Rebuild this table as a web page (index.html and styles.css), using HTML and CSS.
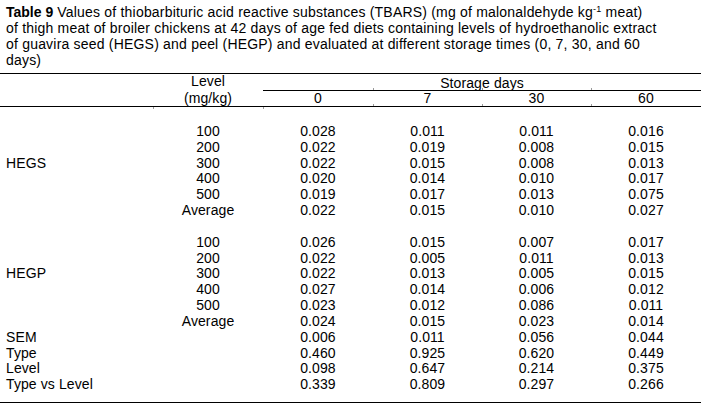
FILE: index.html
```html
<!DOCTYPE html>
<html>
<head>
<meta charset="utf-8">
<link rel="stylesheet" href="styles.css">
</head>
<body>
<div class="page">
  <p class="caption"><b>Table 9</b> Values of thiobarbituric acid reactive substances (TBARS) (mg of malonaldehyde kg<sup>-1</sup> meat)<br>of thigh meat of broiler chickens at 42 days of age fed diets containing levels of hydroethanolic extract<br>of guavira seed (HEGS) and peel (HEGP) and evaluated at different storage times (0, 7, 30, and 60<br>days)</p>
  <table class="data">
    <colgroup>
      <col class="c1"><col class="c2"><col class="c3"><col class="c4"><col class="c5"><col class="c6">
    </colgroup>
    <thead>
      <tr class="h1">
        <th class="first"></th>
        <th class="level">Level</th>
        <th class="storage" colspan="4">Storage days</th>
      </tr>
      <tr class="h2">
        <th class="first"></th>
        <th>(mg/kg)</th>
        <th>0</th>
        <th class="tk">7</th>
        <th class="tk">30</th>
        <th class="tk">60</th>
      </tr>
    </thead>
    <tbody>
      <tr class="spacer"><td colspan="6"></td></tr>
      <tr><td class="first"></td><td>100</td><td>0.028</td><td>0.011</td><td>0.011</td><td>0.016</td></tr>
      <tr><td class="first"></td><td>200</td><td>0.022</td><td>0.019</td><td>0.008</td><td>0.015</td></tr>
      <tr><td class="first">HEGS</td><td>300</td><td>0.022</td><td>0.015</td><td>0.008</td><td>0.013</td></tr>
      <tr><td class="first"></td><td>400</td><td>0.020</td><td>0.014</td><td>0.010</td><td>0.017</td></tr>
      <tr><td class="first"></td><td>500</td><td>0.019</td><td>0.017</td><td>0.013</td><td>0.075</td></tr>
      <tr><td class="first"></td><td>Average</td><td>0.022</td><td>0.015</td><td>0.010</td><td>0.027</td></tr>
      <tr><td class="first">&nbsp;</td><td></td><td></td><td></td><td></td><td></td></tr>
      <tr><td class="first"></td><td>100</td><td>0.026</td><td>0.015</td><td>0.007</td><td>0.017</td></tr>
      <tr><td class="first"></td><td>200</td><td>0.022</td><td>0.005</td><td>0.011</td><td>0.013</td></tr>
      <tr><td class="first">HEGP</td><td>300</td><td>0.022</td><td>0.013</td><td>0.005</td><td>0.015</td></tr>
      <tr><td class="first"></td><td>400</td><td>0.027</td><td>0.014</td><td>0.006</td><td>0.012</td></tr>
      <tr><td class="first"></td><td>500</td><td>0.023</td><td>0.012</td><td>0.086</td><td>0.011</td></tr>
      <tr><td class="first"></td><td>Average</td><td>0.024</td><td>0.015</td><td>0.023</td><td>0.014</td></tr>
      <tr><td class="first">SEM</td><td></td><td>0.006</td><td>0.011</td><td>0.056</td><td>0.044</td></tr>
      <tr><td class="first">Type</td><td></td><td>0.460</td><td>0.925</td><td>0.620</td><td>0.449</td></tr>
      <tr><td class="first">Level</td><td></td><td>0.098</td><td>0.647</td><td>0.214</td><td>0.375</td></tr>
      <tr><td class="first">Type vs Level</td><td></td><td>0.339</td><td>0.809</td><td>0.297</td><td>0.266</td></tr>
      <tr class="end"><td colspan="6"></td></tr>
    </tbody>
  </table>
</div>
</body>
</html>
```

FILE: styles.css
```css
html, body {
  margin: 0;
  padding: 0;
  background: #fff;
}

body {
  font-family: "Liberation Sans", Arial, sans-serif;
  font-size: 14px;
  color: #000;
}

.page {
  width: 707px;
}

.caption {
  margin: 0 0 5px 0;
  padding: 4px 0 0 6px;
  line-height: 16px;
  letter-spacing: 0.2px;
  white-space: nowrap;
}

.caption b {
  font-weight: bold;
  letter-spacing: 0;
}

.caption sup {
  font-size: 9px;
  line-height: 0;
  vertical-align: 5px;
}

.data {
  width: 701px;
  border-collapse: collapse;
  table-layout: fixed;
  border-top: 1px solid #000;
  border-bottom: 1px solid #000;
  letter-spacing: 0.1px;
}

.c1 { width: 153px; }
.c2 { width: 110px; }
.c3 { width: 110px; }
.c4 { width: 109px; }
.c5 { width: 109px; }
.c6 { width: 110px; }

.data th,
.data td {
  padding: 0;
  font-weight: normal;
  text-align: center;
  vertical-align: top;
  white-space: nowrap;
}

.data .first {
  text-align: left;
  padding-left: 6px;
}

.h1 th {
  line-height: 15px;
}

.h1 .storage {
  padding-top: 2px;
  line-height: 14px;
  border-bottom: 1px solid #000;
  background-image:
    linear-gradient(#9a9a9a, #9a9a9a),
    linear-gradient(#9a9a9a, #9a9a9a),
    linear-gradient(#9a9a9a, #9a9a9a);
  background-size: 1px 2px, 1px 2px, 1px 2px;
  background-position: 110px 100%, 219px 100%, 328px 100%;
  background-repeat: no-repeat;
}

.h2 th {
  line-height: 15px;
  border-bottom: 1px solid #000;
}

.h2 .tk {
  background-image: linear-gradient(#9a9a9a, #9a9a9a);
  background-size: 1px 2px;
  background-position: 0 100%;
  background-repeat: no-repeat;
}

.spacer td {
  height: 17px;
  background-image:
    linear-gradient(#9a9a9a, #9a9a9a),
    linear-gradient(#9a9a9a, #9a9a9a);
  background-size: 1px 2px, 1px 2px;
  background-position: 153px 0, 263px 0;
  background-repeat: no-repeat;
}

.data tbody td {
  line-height: 15.83px;
}

.data tbody .spacer td {
  line-height: 0;
}

.data tbody .end td {
  height: 9px;
  line-height: 0;
}
```
